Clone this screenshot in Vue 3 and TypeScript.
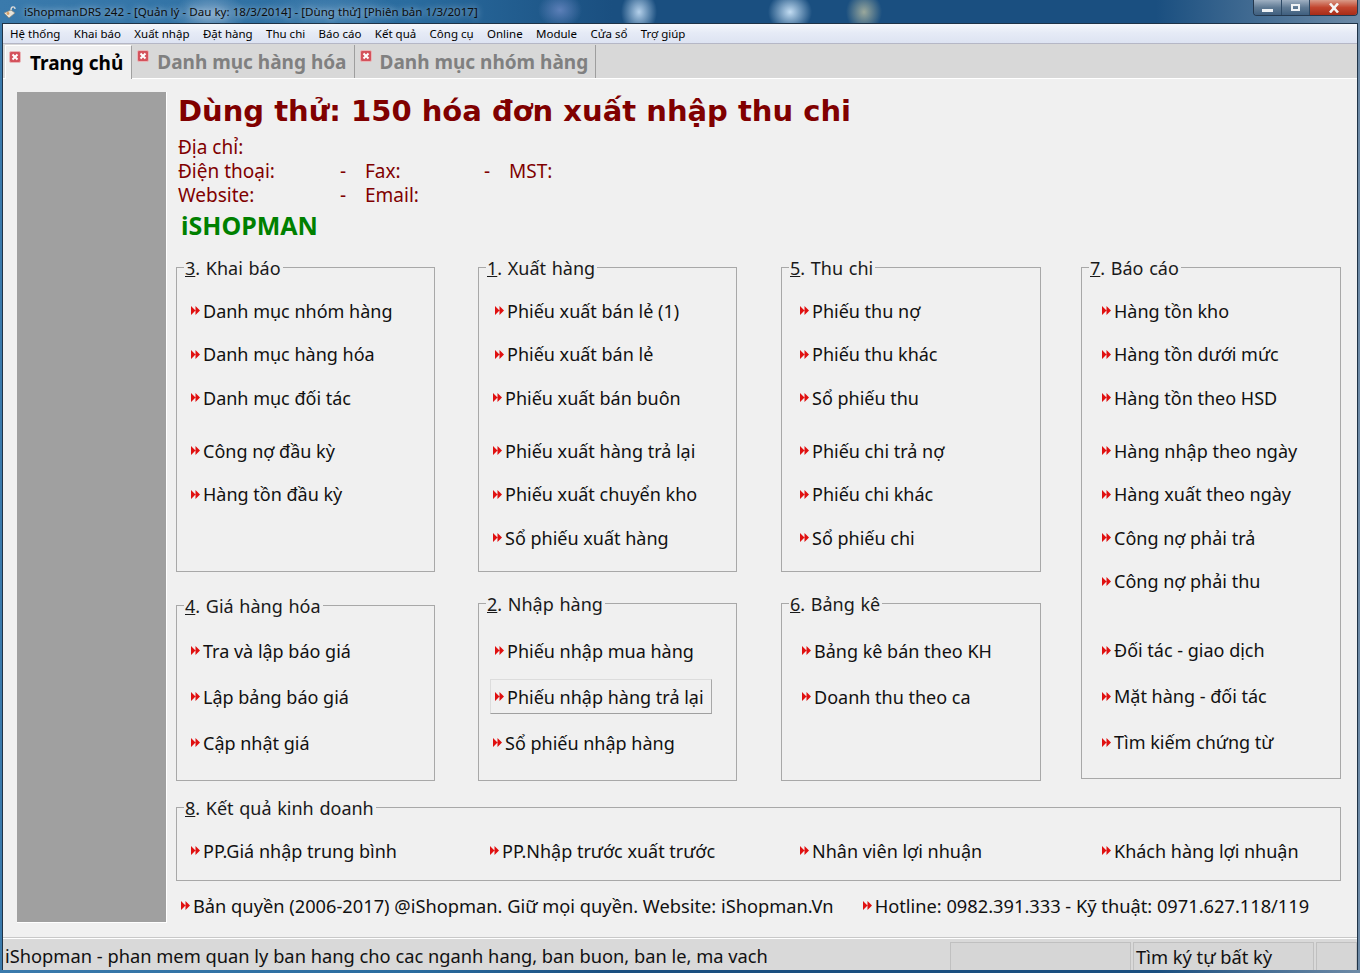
<script setup lang="ts">
interface Item {
  label: string
  gap?: number
  shift?: number
}
interface Group {
  key: string
  rest: string
  cls: string
  indent: number
  items: Item[]
}

const menus = ['Hệ thống', 'Khai báo', 'Xuất nhập', 'Đặt hàng', 'Thu chi', 'Báo cáo', 'Kết quả', 'Công cụ', 'Online', 'Module', 'Cửa sổ', 'Trợ giúp']
const tabs = ['Trang chủ', 'Danh mục hàng hóa', 'Danh mục nhóm hàng']

const groups: Group[] = [
  { key: '3', rest: '. Khai báo', cls: 'g-khai', indent: 14, items: [
    { label: 'Danh mục nhóm hàng' }, { label: 'Danh mục hàng hóa' }, { label: 'Danh mục đối tác' },
    { label: 'Công nợ đầu kỳ', gap: 9.5 }, { label: 'Hàng tồn đầu kỳ' },
  ] },
  { key: '1', rest: '. Xuất hàng', cls: 'g-xuat', indent: 14, items: [
    { label: 'Phiếu xuất bán lẻ (1)', shift: 2 }, { label: 'Phiếu xuất bán lẻ', shift: 2 }, { label: 'Phiếu xuất bán buôn' },
    { label: 'Phiếu xuất hàng trả lại', gap: 9.5 }, { label: 'Phiếu xuất chuyển kho' }, { label: 'Sổ phiếu xuất hàng' },
  ] },
  { key: '5', rest: '. Thu chi', cls: 'g-thu', indent: 18, items: [
    { label: 'Phiếu thu nợ' }, { label: 'Phiếu thu khác' }, { label: 'Sổ phiếu thu' },
    { label: 'Phiếu chi trả nợ', gap: 9.5 }, { label: 'Phiếu chi khác' }, { label: 'Sổ phiếu chi' },
  ] },
  { key: '7', rest: '. Báo cáo', cls: 'g-bao', indent: 20, items: [
    { label: 'Hàng tồn kho' }, { label: 'Hàng tồn dưới mức' }, { label: 'Hàng tồn theo HSD' },
    { label: 'Hàng nhập theo ngày', gap: 9.5 }, { label: 'Hàng xuất theo ngày' }, { label: 'Công nợ phải trả' }, { label: 'Công nợ phải thu' },
    { label: 'Đối tác - giao dịch', gap: 25.5 }, { label: 'Mặt hàng - đối tác', gap: 2.5 }, { label: 'Tìm kiếm chứng từ', gap: 2.5 },
  ] },
  { key: '4', rest: '. Giá hàng hóa', cls: 'g-gia', indent: 14, items: [
    { label: 'Tra và lập báo giá' }, { label: 'Lập bảng báo giá', gap: 2.5 }, { label: 'Cập nhật giá', gap: 2.5 },
  ] },
  { key: '2', rest: '. Nhập hàng', cls: 'g-nhap', indent: 14, items: [
    { label: 'Phiếu nhập mua hàng', shift: 2 }, { label: 'Phiếu nhập hàng trả lại', gap: 2.5, shift: 2 }, { label: 'Sổ phiếu nhập hàng', gap: 2.5 },
  ] },
  { key: '6', rest: '. Bảng kê', cls: 'g-bang', indent: 20, items: [
    { label: 'Bảng kê bán theo KH' }, { label: 'Doanh thu theo ca', gap: 2.5 },
  ] },
]

const results = ['PP.Giá nhập trung bình', 'PP.Nhập trước xuất trước', 'Nhân viên lợi nhuận', 'Khách hàng lợi nhuận']
const itemStyle = (g: Group, it: Item) => ({ marginTop: `${it.gap ?? 0}px`, marginLeft: `${g.indent + (it.shift ?? 0)}px` })
</script>

<template>
  <div class="window">
    <div class="titlebar">
      <svg class="app-icon" width="16" height="16" viewBox="0 0 16 16">
        <path d="M1 9 L8 6 L12 9 L6 14 Z" fill="#e8e4da" stroke="#8a8478" stroke-width=".7" />
        <path d="M8 6 C8 2 12 2 12 5" fill="none" stroke="#d9d9d9" stroke-width="1.4" />
        <circle cx="5" cy="9.5" r="1.4" fill="#d9a066" />
      </svg>
      <span class="title">iShopmanDRS 242 - [Quản lý - Dau ky: 18/3/2014] - [Dùng thử] [Phiên bản 1/3/2017]</span>
      <div class="controls">
        <span class="ctl ctl-min"><i /></span>
        <span class="ctl ctl-max"><i /></span>
        <span class="ctl ctl-close">
          <svg width="14" height="10" viewBox="0 0 14 10"><path d="M3 0.5 L11 9.5 M11 0.5 L3 9.5" stroke="#f4f4f4" stroke-width="2.6" /></svg>
        </span>
      </div>
    </div>

    <div class="frame">
      <div class="menubar">
        <span v-for="m in menus" :key="m">{{ m }}</span>
      </div>

      <div class="tabstrip">
        <div v-for="(t, i) in tabs" :key="t" class="tab" :class="{ active: i === 0 }">
          <svg class="tab-x" width="12" height="12" viewBox="0 0 12 12">
            <rect x=".5" y=".5" width="11" height="11" rx="1.5" fill="#d4525c" stroke="#e9b5b8" />
            <path d="M3.5 3.5 L8.5 8.5 M8.5 3.5 L3.5 8.5" stroke="#fff" stroke-width="2" />
          </svg>
          <span>{{ t }}</span>
        </div>
      </div>

      <div class="page">
        <aside class="side" />
        <main class="main">
          <h1>Dùng thử: 150 hóa đơn xuất nhập thu chi</h1>
          <div class="info">
            <div>Địa chỉ:</div>
            <div class="info-row"><span class="c1">Điện thoại:</span><span class="c2">-</span><span class="c3">Fax:</span><span class="c4">-</span><span>MST:</span></div>
            <div class="info-row"><span class="c1">Website:</span><span class="c2">-</span><span class="c3">Email:</span></div>
          </div>
          <div class="brand">iSHOPMAN</div>

          <div class="groups">
            <fieldset v-for="g in groups" :key="g.key" class="group" :class="g.cls">
              <legend><u>{{ g.key }}</u>{{ g.rest }}</legend>
              <a v-for="it in g.items" :key="it.label" class="item" :class="{ hover: it.label === 'Phiếu nhập hàng trả lại' }" :style="itemStyle(g, it)">
                <svg class="arrow" width="9" height="9" viewBox="0 0 9 9"><path d="M0 0 L4.5 4.5 L0 9 Z M4.5 0 L9 4.5 L4.5 9 Z" fill="#e01010" /></svg>{{ it.label }}
              </a>
            </fieldset>
          </div>

          <fieldset class="group result">
            <legend><u>8</u>. Kết quả kinh doanh</legend>
            <div class="result-row">
              <a v-for="r in results" :key="r" class="item">
                <svg class="arrow" width="9" height="9" viewBox="0 0 9 9"><path d="M0 0 L4.5 4.5 L0 9 Z M4.5 0 L9 4.5 L4.5 9 Z" fill="#e01010" /></svg>{{ r }}
              </a>
            </div>
          </fieldset>

          <div class="copy">
            <a class="item">
              <svg class="arrow" width="9" height="9" viewBox="0 0 9 9"><path d="M0 0 L4.5 4.5 L0 9 Z M4.5 0 L9 4.5 L4.5 9 Z" fill="#e01010" /></svg>Bản quyền (2006-2017) @iShopman. Giữ mọi quyền. Website: iShopman.Vn
            </a>
            <a class="item">
              <svg class="arrow" width="9" height="9" viewBox="0 0 9 9"><path d="M0 0 L4.5 4.5 L0 9 Z M4.5 0 L9 4.5 L4.5 9 Z" fill="#e01010" /></svg>Hotline: 0982.391.333 - Kỹ thuật: 0971.627.118/119
            </a>
          </div>
        </main>
      </div>

      <div class="statusbar">
        <div class="st st-msg">iShopman - phan mem quan ly ban hang cho cac nganh hang, ban buon, ban le, ma vach</div>
        <div class="st st-a" />
        <div class="st st-find">Tìm ký tự bất kỳ</div>
        <div class="st st-b" />
      </div>
    </div>
  </div>
</template>

<style scoped>
.window {
  width: 1360px;
  height: 973px;
  display: flex;
  flex-direction: column;
  overflow: hidden;
  font-family: "Noto Sans", "Liberation Sans", sans-serif;
  color: #000;
  background:
    radial-gradient(ellipse 22px 20px at 790px 12px, #c2dcf2, transparent),
    radial-gradient(ellipse 18px 20px at 864px 12px, #9aa89c, transparent),
    radial-gradient(ellipse 18px 22px at 639px 12px, #b4d0ea, transparent),
    radial-gradient(ellipse 22px 18px at 560px 10px, #5c7fb8, transparent),
    radial-gradient(ellipse 36px 22px at 210px 14px, #7fa6c8, transparent),
    radial-gradient(ellipse 70px 24px at 330px 14px, #4d86b4, transparent),
    linear-gradient(90deg, #3a7aac 0, #2a6c9f 30%, #1a4f80 45%, #1a4f80 85%, #6d8aa6 100%);
}

.titlebar {
  height: 23px;
  flex: none;
  display: flex;
  align-items: center;
  padding-left: 3px;
  position: relative;
}

.app-icon {
  margin-right: 5px;
}

.title {
  font-size: 11.6px;
  color: #0d0d0d;
  text-shadow: 0 0 6px rgba(235, 245, 255, .85);
  white-space: nowrap;
}

.controls {
  position: absolute;
  right: 2px;
  top: 0;
  display: flex;
  height: 15px;
  border: 1px solid #24384e;
  border-top: 0;
  border-radius: 0 0 4px 4px;
  overflow: hidden;
}

.ctl {
  display: flex;
  align-items: center;
  justify-content: center;
  height: 100%;
  border-left: 1px solid #2d4a66;
}

.ctl-min,
.ctl-max {
  width: 27px;
  background: linear-gradient(#9fb0c2, #5f7a94 50%, #3f5f7f);
}

.ctl-min {
  border-left: 0;
}

.ctl-min i {
  width: 11px;
  height: 3px;
  margin-top: 5px;
  background: #eef2f5;
}

.ctl-max i {
  width: 9px;
  height: 7px;
  border: 2px solid #eef2f5;
  box-sizing: border-box;
}

.ctl-close {
  width: 47px;
  background: linear-gradient(#d99a88, #c2452e 50%, #a82c18);
}

.frame {
  flex: 1;
  min-height: 0;
  margin: 0 2px 3px 2px;
  border: 1px solid #1f3347;
  border-bottom: 0;
  display: flex;
  flex-direction: column;
  background: #f0f0f0;
}

.menubar {
  height: 19px;
  flex: none;
  display: flex;
  align-items: center;
  gap: 13.4px;
  padding-left: 7px;
  font-size: 11.5px;
  background: linear-gradient(#f6f8fc 0, #e6ebf6 45%, #dde3f2 100%);
  border-bottom: 1px solid #b5b7c6;
}

.tabstrip {
  height: 34px;
  flex: none;
  display: flex;
  align-items: flex-end;
  background: #d8d8d8;
  border-bottom: 1px solid #fff;
  padding-left: 2px;
}

.tab {
  height: 33px;
  box-sizing: border-box;
  display: flex;
  align-items: center;
  gap: 8px;
  padding: 0 7px 0 5px;
  font-size: 19px;
  font-weight: 700;
  color: #808080;
  border-right: 1px solid #9e9e9e;
  white-space: nowrap;
  background: #d8d8d8;
}

.tab.active {
  color: #000;
  background: #f0f0f0;
  height: 34px;
  gap: 9px;
  padding: 0 8px 0 3px;
  border-left: 1px solid #fff;
  border-top: 1px solid #fff;
  border-right: 1px solid #a0a0a0;
  margin-bottom: -1px;
}

.tab-x {
  align-self: flex-start;
  margin-top: 5px;
  flex: none;
}

.page {
  flex: 1;
  min-height: 0;
  display: flex;
  gap: 9px;
  padding: 13px 17px 14px 14px;
  border-bottom: 1px solid #c8c8c8;
}

.side {
  width: 149px;
  flex: none;
  background: #a0a0a0;
  border-right: 1px solid #fff;
  border-bottom: 1px solid #fff;
}

.main {
  flex: 1;
  min-width: 0;
}

h1 {
  margin: 1px 0 0 2px;
  font-family: "DejaVu Sans", sans-serif;
  font-size: 29px;
  line-height: 36px;
  font-weight: 700;
  color: #800000;
  white-space: nowrap;
}

.info {
  margin: 6px 0 0 2px;
  font-size: 19px;
  line-height: 24px;
  color: #800000;
}

.info-row {
  display: flex;
}

.c1 {
  width: 162px;
}

.c2 {
  width: 25px;
}

.c3 {
  width: 119px;
}

.c4 {
  width: 25px;
}

.brand {
  margin: 2px 0 0 5px;
  font-size: 25px;
  line-height: 32px;
  font-weight: 700;
  color: #008000;
}

.groups {
  display: grid;
  grid-template-columns: 302px 303px 300px 260px;
  grid-template-rows: 316px 189px;
  row-gap: 20px;
  margin-top: 15px;
}

.group {
  margin: 0;
  padding: 11px 0 0;
  min-width: 0;
  border: 1px solid #a8a8a8;
  display: flex;
  flex-direction: column;
}

.group legend {
  margin-left: 7px;
  padding: 2px 2px 0 1px;
  font-size: 18px;
  line-height: 20px;
  word-spacing: 1px;
  color: #1a1a1a;
}

.g-khai,
.g-xuat,
.g-gia,
.g-nhap {
  width: 259px;
  box-sizing: border-box;
}

.g-thu,
.g-bang {
  width: 260px;
  box-sizing: border-box;
}

.g-bao {
  grid-column: 4;
  grid-row: 1 / 3;
  margin-bottom: 2px;
}

.g-gia {
  grid-column: 1;
  grid-row: 2;
  margin-top: 2px;
  padding-top: 13px;
}

.g-nhap {
  grid-column: 2;
  grid-row: 2;
  padding-top: 15px;
}

.g-bang {
  grid-column: 3;
  grid-row: 2;
  padding-top: 15px;
}

.item {
  display: flex;
  align-items: center;
  width: max-content;
  height: 43.5px;
  font-size: 18px;
  color: #111;
  white-space: nowrap;
}

.item.hover {
  box-sizing: border-box;
  height: 35px;
  margin: 6.75px 0 4.25px 11px !important;
  padding: 0 7px 0 4px;
  border: 1px solid #dcdcdc;
  border-right-color: #a8a8a8;
  border-bottom-color: #a0a0a0;
}

.arrow {
  flex: none;
  margin-right: 3px;
}

.result {
  margin-top: 15px;
  padding: 0;
  width: 1165px;
  height: 85px;
  box-sizing: border-box;
}

.result-row {
  display: grid;
  grid-template-columns: 299px 310px 302px 1fr;
  margin-top: 11px;
  padding-left: 14px;
}

.copy {
  display: flex;
  gap: 29px;
  margin: 3px 0 0 5px;
}

.copy .item {
  font-size: 18.25px;
}

.statusbar {
  height: 31px;
  flex: none;
  display: flex;
  gap: 2px;
  background: #d9d9d9;
  border-top: 1px solid #fff;
  font-size: 18.3px;
}

.st {
  box-sizing: border-box;
  display: flex;
  align-items: center;
  margin-top: 3px;
  padding-left: 2px;
  white-space: nowrap;
  background: #d6d6d6;
  border: 1px solid #c0c0c0;
  border-bottom: 0;
  color: #111;
}

.st-msg {
  width: 945px;
  margin-top: 1px;
  border: 0;
  background: transparent;
  overflow: hidden;
}

.st-a,
.st-find {
  width: 181px;
}

.st-b {
  flex: 1;
}
</style>
